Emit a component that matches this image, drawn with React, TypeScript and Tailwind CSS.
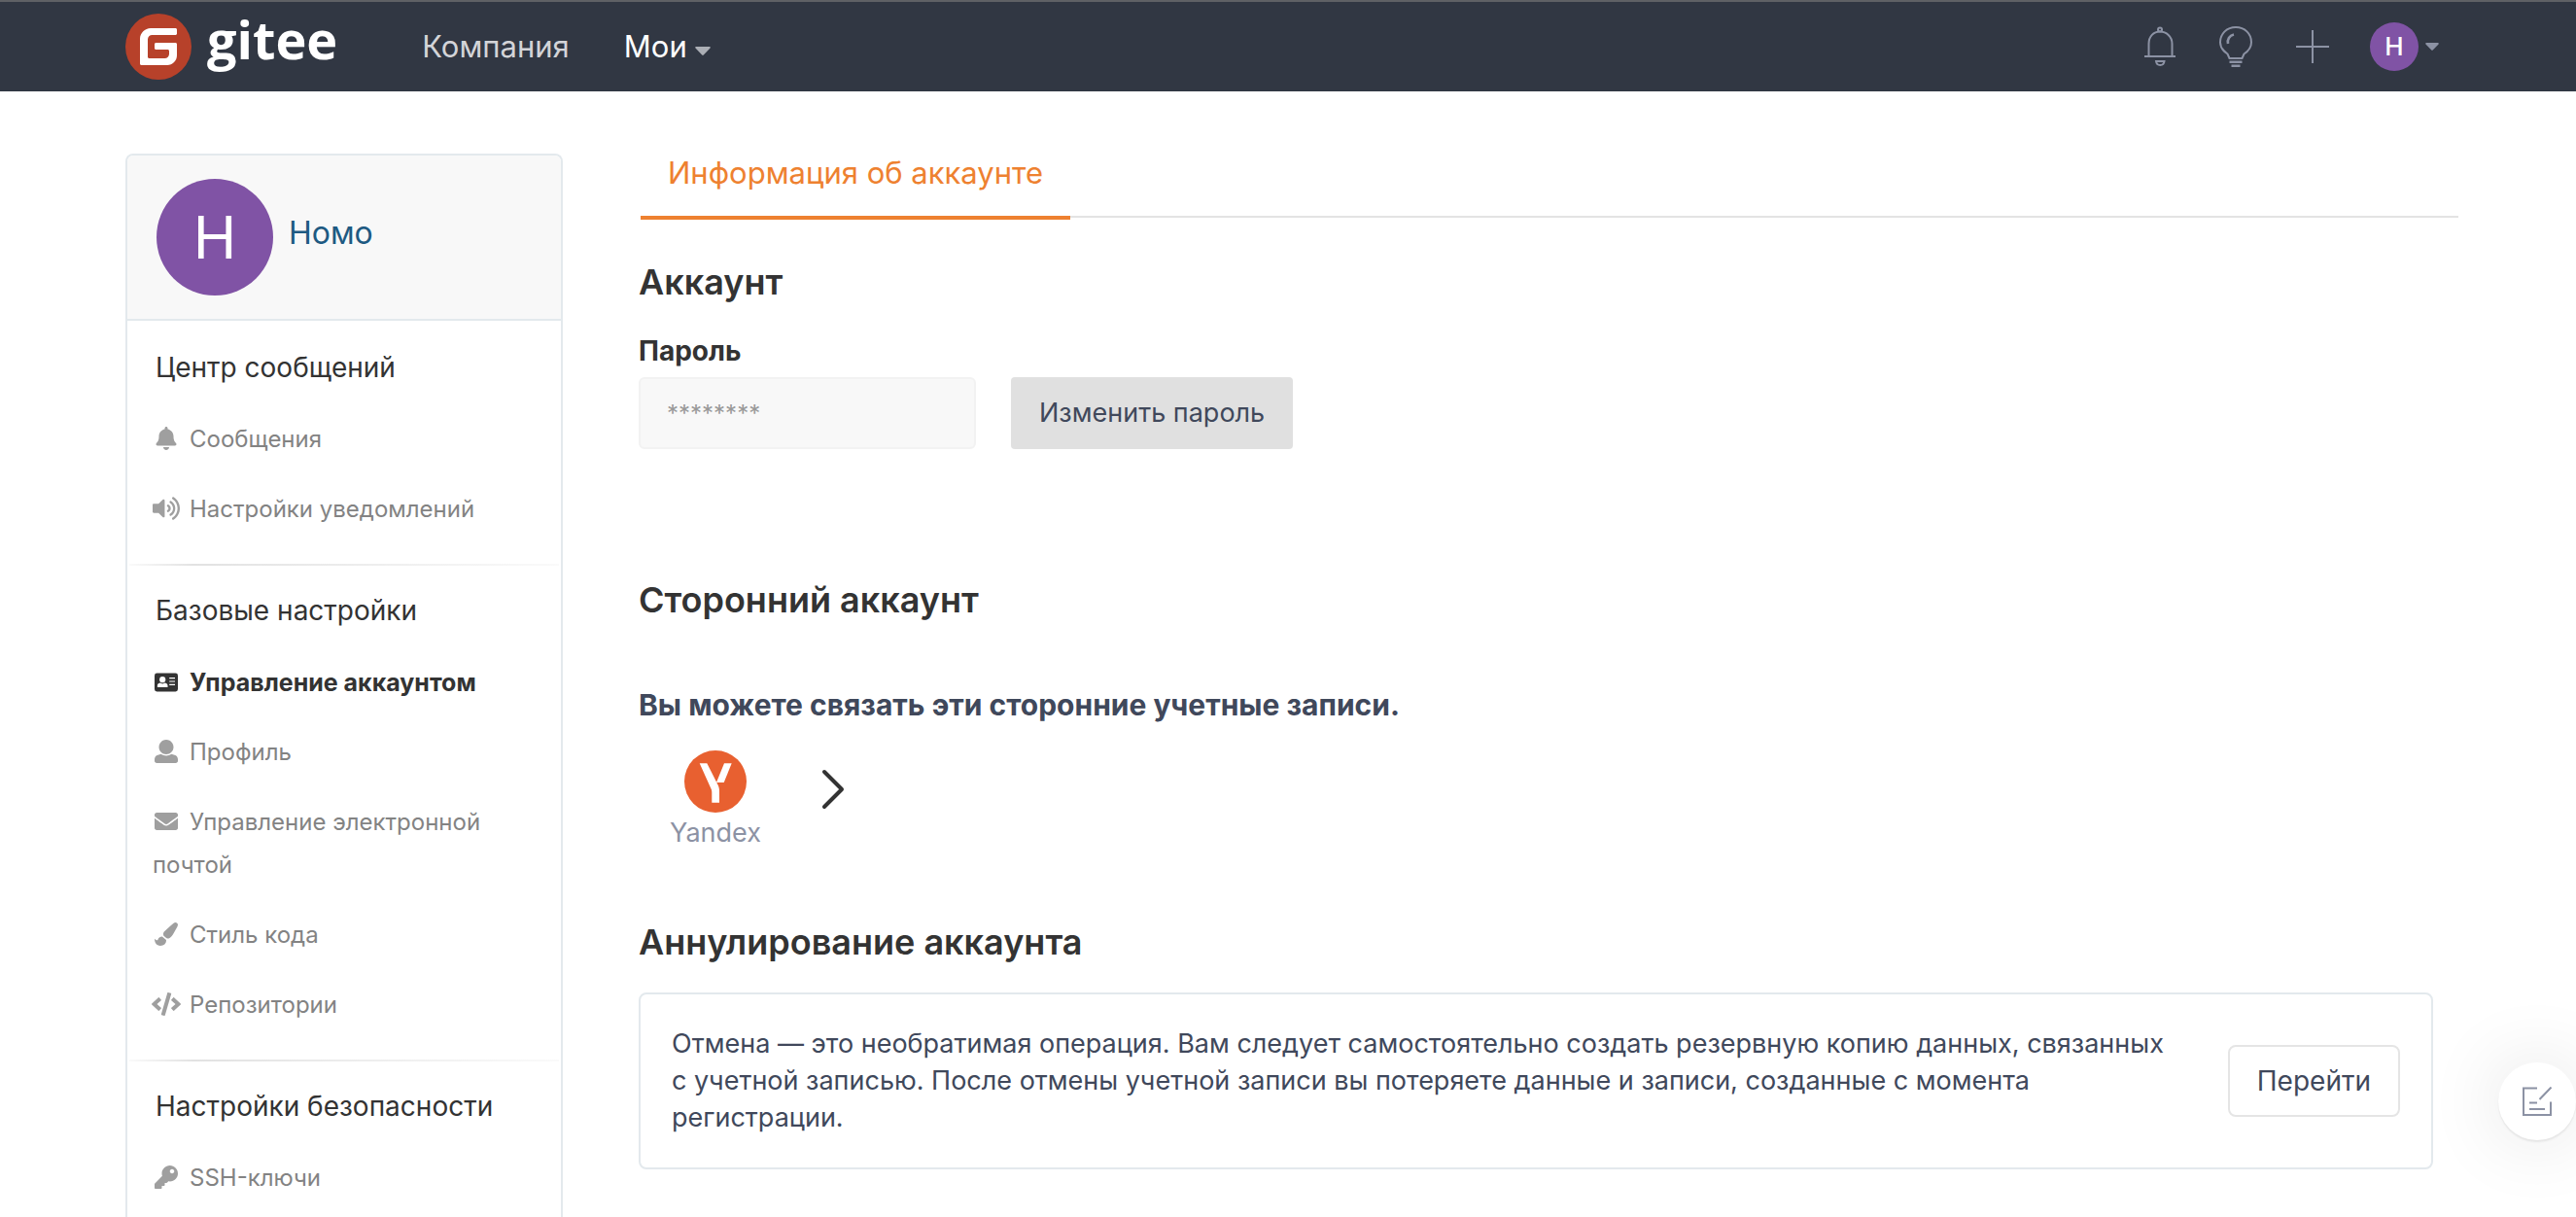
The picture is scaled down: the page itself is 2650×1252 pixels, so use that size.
import React from "react";
import type { ReactNode } from "react";
import { FaBell, FaVolumeUp, FaEnvelope, FaPaintBrush, FaCode, FaKey } from "react-icons/fa";

function UserIcon() {
  return (
    <svg viewBox="0 0 512 512" className="h-6 w-6" fill="currentColor" aria-hidden="true">
      <path d="M256 0c88.366 0 160 71.634 160 160s-71.634 160-160 160S96 248.366 96 160 167.634 0 256 0zm183.283 333.821l-71.313-17.828c-74.923 53.89-165.738 41.864-223.94 0l-71.313 17.828C29.981 344.505 0 382.903 0 426.955V464c0 26.51 21.49 48 48 48h416c26.51 0 48-21.49 48-48v-37.045c0-44.052-29.981-82.45-72.717-93.134z" />
    </svg>
  );
}

function CardIcon() {
  return (
    <svg viewBox="0 0 24 24" className="h-6 w-6" aria-hidden="true">
      <rect x="0" y="2.6" width="24" height="18.8" rx="2.4" fill="currentColor" />
      <circle cx="8.2" cy="9.2" r="3.1" fill="#fff" />
      <path d="M2.9 17v-1.6c0-1.4 1-2.4 2.6-2.8 1.7 1.1 3.7 1.1 5.4 0 1.6.4 2.6 1.4 2.6 2.8V17z" fill="#fff" />
      <path d="M15.2 7.6H21M15.2 11H21M15.2 14.4H21" stroke="#fff" strokeWidth="1.2" />
    </svg>
  );
}

function Logo() {
  return (
    <a href="#" className="flex items-center gap-4" aria-label="gitee">
      <svg viewBox="0 0 68 68" className="h-17 w-17" aria-hidden="true">
        <circle cx="34" cy="34" r="34" fill="#b7412a" />
        <path
          d="M51.5 15H26c-6 0-11 5-11 11v25.500c0 .8.700 1.500 1.500 1.500H43c5.500 0 10-4.500 10-10V31.500c0-.8-.7-1.500-1.500-1.500H31.500c-.8 0-1.500.7-1.500 1.500v4c0 .8.700 1.500 1.500 1.500H43.500c.8 0 1.500.7 1.500 1.500v3c0 2.500-2 4.500-4.500 4.500H24.500c-.8 0-1.500-.7-1.500-1.500V26.500c0-2.500 2-4.500 4.500-4.500h24c.8 0 1.500-.7 1.500-1.500v-4c0-.8-.7-1.500-1.500-1.500z"
          fill="#fff"
        />
      </svg>
      <span className="-mt-4 font-['Open_Sans',sans-serif] text-[54px] leading-[60px] font-bold text-white">gitee</span>
    </a>
  );
}

function Caret({ className }: { className: string }) {
  return (
    <svg viewBox="0 0 16 9" className={className} fill="currentColor" aria-hidden="true">
      <path d="M1.200 0h13.600c.9 0 1.300 1 .7 1.600L8.800 8.500a1.100 1.100 0 0 1-1.600 0L.5 1.600C-.1 1 .3 0 1.200 0z" />
    </svg>
  );
}

function Header() {
  return (
    <header className="flex h-[94px] shrink-0 items-center border-t-2 border-[#5f6165] bg-[#313743] pr-[141px] pl-[129px]">
      <Logo />
      <nav className="ml-[87px] flex items-center gap-14 text-[31px] leading-10">
        <a href="#" className="text-[#d3d4d8]">Компания</a>
        <button type="button" className="flex items-center gap-2 text-white">
          Мои
          <Caret className="mt-2 h-[9px] w-4 text-[#abaeb5]" />
        </button>
      </nav>
      <div className="ml-auto flex items-center text-[#8c92a4]">
        <button type="button" aria-label="Уведомления">
          <svg viewBox="0 0 32 42" className="h-[42px] w-8" fill="none" stroke="currentColor" strokeWidth="2" aria-hidden="true">
            <circle cx="16" cy="3.500" r="2" />
            <path d="M4.500 30V18C4.500 10.500 9.500 5.500 16 5.500S28.500 10.500 28.500 18v12M0 31h32M12 36h8.500c-.3 2.600-2 4-4.300 4S12.300 38.600 12 36z" />
          </svg>
        </button>
        <button type="button" aria-label="Подсказки" className="ml-[45px]">
          <svg viewBox="0 0 34 42" className="h-[42px] w-[34px]" fill="none" stroke="currentColor" strokeWidth="2" aria-hidden="true">
            <path d="M10.500 33h13l2-4.500C30 25.500 33 21.500 33 16.500 33 7.500 26 1 17 1S1 7.500 1 16.500c0 5 3 9 7.500 12z" />
            <path d="M9 18c-1-4.500 1.500-8.500 6-9.500" strokeWidth="2.600" />
            <path d="M10.500 36.800h13M12.500 40.800h9" strokeWidth="2.600" />
          </svg>
        </button>
        <button type="button" aria-label="Создать" className="ml-[45px]">
          <svg viewBox="0 0 34 34" className="h-[34px] w-[34px]" stroke="currentColor" strokeWidth="2" aria-hidden="true">
            <path d="M0 17h34M17 0v34" />
          </svg>
        </button>
        <button type="button" aria-label="Меню профиля" className="ml-[42px] flex items-center gap-[7px]">
          <span className="flex h-[50px] w-[50px] items-center justify-center rounded-full bg-[#8053a5] text-[26px] leading-none font-medium text-white">H</span>
          <Caret className="h-2 w-3.5" />
        </button>
      </div>
    </header>
  );
}

type Item = { label: string; icon: ReactNode; active?: boolean };

const groups: { title: string; items: Item[] }[] = [
  {
    title: "Центр сообщений",
    items: [
      { label: "Сообщения", icon: <FaBell size={24} /> },
      { label: "Настройки уведомлений", icon: <FaVolumeUp size={28} className="shrink-0" /> },
    ],
  },
  {
    title: "Базовые настройки",
    items: [
      { label: "Управление аккаунтом", icon: <CardIcon />, active: true },
      { label: "Профиль", icon: <UserIcon /> },
      { label: "Управление электронной почтой", icon: <FaEnvelope size={24} /> },
      { label: "Стиль кода", icon: <FaPaintBrush size={24} /> },
      { label: "Репозитории", icon: <FaCode size={30} className="shrink-0" /> },
    ],
  },
  { title: "Настройки безопасности", items: [{ label: "SSH-ключи", icon: <FaKey size={24} /> }] },
];

function Sidebar() {
  return (
    <aside className="w-[450px] shrink-0 rounded-t-lg border-2 border-b-0 border-[#e3e9ed]">
      <div className="flex items-center gap-4 rounded-t-md border-b-2 border-[#e3e9ed] bg-[#f8f8f8] px-[30px] py-6">
        <span className="flex h-[120px] w-[120px] items-center justify-center rounded-full bg-[#8053a5] text-[60px] leading-none text-white">H</span>
        <a href="#" className="mb-2 text-[32px] leading-10 text-[#1e5a82]">Номо</a>
      </div>
      <nav className="pt-0.5">
        {groups.map((g, i) => (
          <section key={g.title}>
            {i > 0 && <div className="mx-0.5 mt-5 h-0.5 bg-linear-to-r from-[#fafafa] via-[#e2e2e2] via-15% to-[#fafafa]" />}
            <h4 className="px-[29px] pt-[26px] pb-[18px] text-[28px] leading-10 text-[#333]">{g.title}</h4>
            <ul>
              {g.items.map((it) => (
                <li key={it.label}>
                  <a
                    href="#"
                    aria-current={it.active ? "page" : undefined}
                    className={
                      it.active
                        ? "block px-[26px] py-3.5 text-[25px] leading-11 font-bold text-[#333]"
                        : "block px-[26px] py-3.5 text-[24px] leading-11 text-[#838383]"
                    }
                  >
                    <span className={it.active ? "mr-2.5 mb-1 inline-flex h-6 w-7 items-center justify-center align-middle" : "mr-2.5 mb-1 inline-flex h-6 w-7 items-center justify-center align-middle text-[#9f9f9f]"}>
                      {it.icon}
                    </span>
                    {it.label}
                  </a>
                </li>
              ))}
            </ul>
          </section>
        ))}
      </nav>
    </aside>
  );
}

function Content() {
  return (
    <main className="min-w-0 flex-1 text-[27px] leading-[38px] text-[#40485b]">
      <div className="ml-0.5 flex border-b-2 border-[#e3e3e3]">
        <a href="#" className="-mb-1 border-b-4 border-[#ee8130] px-7 pb-6 text-[31px] leading-10 text-[#ee8130]">
          Информация об аккаунте
        </a>
      </div>

      <section className="pt-11">
        <h3 className="text-[36px] leading-[44px] font-semibold text-[#333]">Аккаунт</h3>
        <label htmlFor="password" className="mt-[30px] block text-[28px] font-bold text-[#333]">Пароль</label>
        <div className="mt-2 flex items-center gap-9">
          <input
            id="password"
            type="text"
            readOnly
            value="********"
            className="h-[74px] w-[347px] rounded-md border-2 border-[#f2f2f2] bg-[#f8f8f8] px-[27px] text-[24px] text-[#999]"
          />
          <button type="button" className="h-[74px] rounded-sm bg-[#e0e0e0] px-[29px]">Изменить пароль</button>
        </div>
      </section>

      <section className="pt-[133px]">
        <h3 className="text-[36px] leading-[44px] font-semibold text-[#333]">Сторонний аккаунт</h3>
        <p className="mt-[67px] text-[30px] font-bold">Вы можете связать эти сторонние учетные записи.</p>
        <div className="mt-7 flex items-center">
          <a href="#" className="ml-8 flex flex-col items-center text-[#8c92a4]">
            <svg viewBox="0 0 64 64" className="h-16 w-16" aria-hidden="true">
              <circle cx="32" cy="32" r="32" fill="#e86030" />
              <path d="M15.700 13.300h7.600L34.300 35c1.300 2.700 1.700 4.200 1.700 7v11.700h-7.700V43.500c0-1.600-.2-2.600-.9-4.200z" fill="#fff" />
              <path d="M41 13.300h7.700L40.700 33H33z" fill="#fff" />
            </svg>
            <span className="mt-0.5">Yandex</span>
          </a>
          <button type="button" aria-label="Далее" className="mb-6 ml-[62px]">
            <svg viewBox="0 0 24 42" className="h-[42px] w-6" fill="none" stroke="#333" strokeWidth="4" strokeLinecap="round" strokeLinejoin="round" aria-hidden="true">
              <path d="M3 3l18 18L3 39" />
            </svg>
          </button>
        </div>
      </section>

      <section className="pt-[71px] pr-[26px]">
        <h3 className="text-[36px] leading-[44px] font-semibold text-[#333]">Аннулирование аккаунта</h3>
        <div className="mt-[30px] flex items-center justify-between gap-11 rounded-lg border-2 border-[#e3e9ed] p-8">
          <p>
            Отмена — это необратимая операция. Вам следует самостоятельно создать резервную копию данных, связанных с учетной записью. После отмены учетной записи вы потеряете данные и записи, созданные с момента регистрации.
          </p>
          <button type="button" className="h-[74px] shrink-0 rounded-lg border-2 border-[#e5e5e5] px-7 text-[28px]">Перейти</button>
        </div>
      </section>
    </main>
  );
}

export default function App() {
  return (
    <div className="flex min-h-screen flex-col bg-white font-['Inter','Liberation_Sans',sans-serif]">
      <Header />
      <div className="flex flex-1 gap-[78px] pt-16 pr-[121px] pl-[129px]">
        <Sidebar />
        <Content />
      </div>
      <button
        type="button"
        aria-label="Обратная связь"
        className="fixed right-0 bottom-[79px] flex h-20 w-20 items-center justify-center rounded-full bg-white shadow-[0_2px_2px_rgba(0,0,0,0.08),0_0_80px_rgba(0,0,0,0.12)]"
      >
        <svg viewBox="0 0 30 30" className="h-[30px] w-[30px]" fill="none" stroke="#8c92a4" strokeWidth="2" aria-hidden="true">
          <path d="M15 1.500H1V29h28V15.500M29.500.5L17.500 13M7 16.500h8M7 23h16" />
        </svg>
      </button>
    </div>
  );
}
